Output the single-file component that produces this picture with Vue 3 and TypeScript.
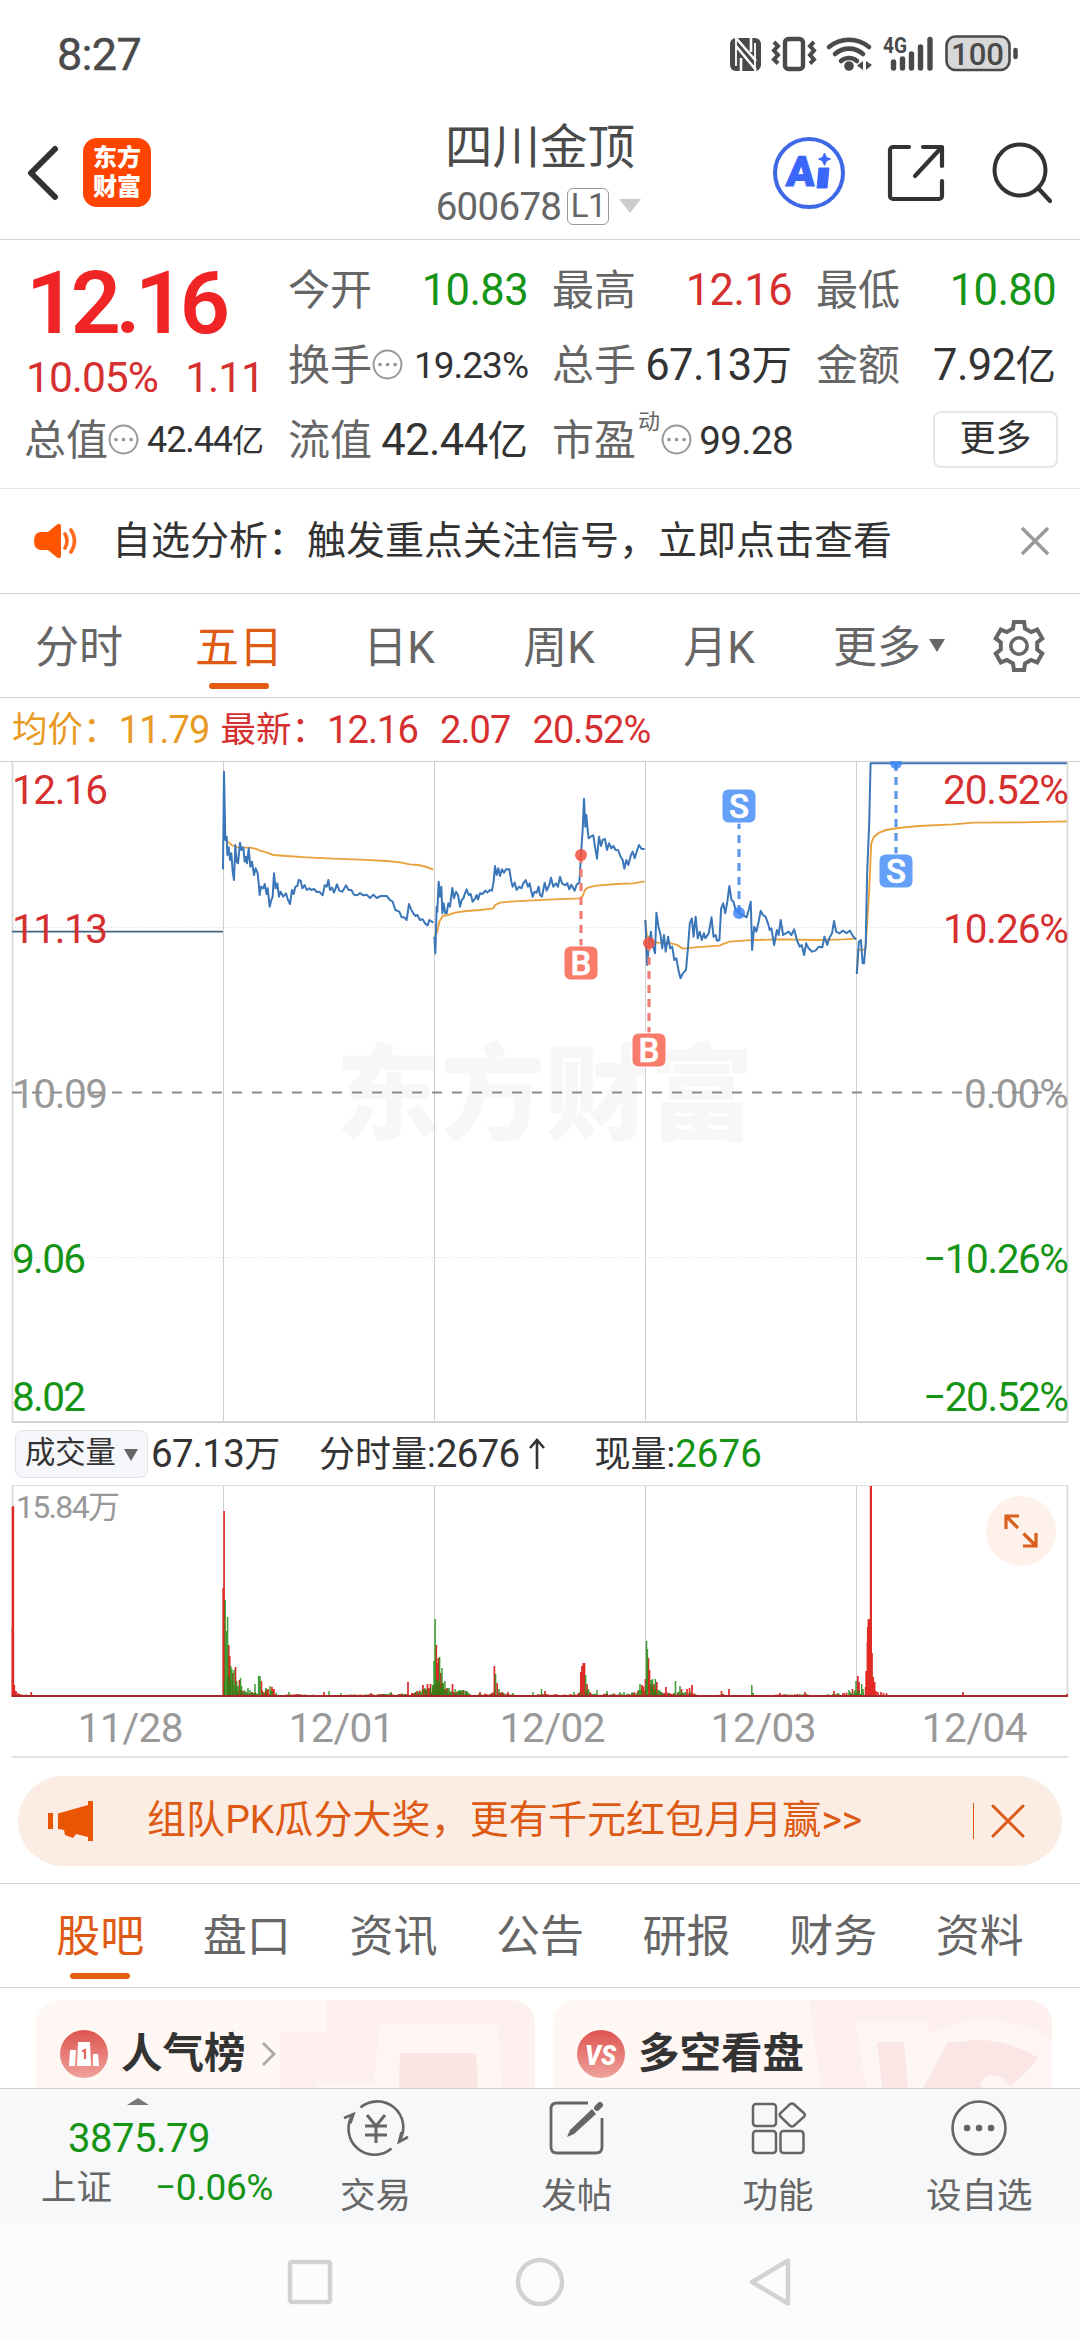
<script setup lang="ts">
interface Tab { label: string; active?: boolean }
interface Series { price: string; avg: string; transform: string }

const periods: Tab[] = [
  { label: '分时' },
  { label: '五日', active: true },
  { label: '日K' },
  { label: '周K' },
  { label: '月K' },
]

const sections: Tab[] = [
  { label: '股吧', active: true },
  { label: '盘口' },
  { label: '资讯' },
  { label: '公告' },
  { label: '研报' },
  { label: '财务' },
  { label: '资料' },
]

const dates = ['11/28', '12/01', '12/02', '12/03', '12/04']
const dayLines = [223.5, 434.5, 645.5, 856.5]

const left = 'translate(200 740) scale(0.33333)'
const right = 'translate(540 590) scale(0.34435 0.33333)'

const series: Series[] = [
  {
    transform: left,
    price: '69,388 72,95 76,300 80,290 82,345 86,322 90,360 94,340 98,395 102,420 106,315 110,365 114,370 120,308 124,330 130,322 134,365 138,350 141,370 146,325 151,380 156,365 162,405 167,385 173,400 176,430 179,465 183,440 190,445 194,432 200,462 203,445 209,500 214,480 218,470 222,400 227,445 232,430 237,470 242,455 250,470 258,460 264,480 270,492 276,450 281,462 286,440 292,438 296,420 302,422 307,445 314,435 320,450 328,445 334,450 342,447 350,456 358,455 368,466 374,436 380,440 385,420 390,450 396,443 402,458 411,433 418,452 427,455 438,436 446,450 454,450 462,464 472,466 480,459 490,466 500,464 510,474 520,464 530,474 542,468 560,468 570,480 578,485 586,510 598,515 605,532 612,532 620,540 627,492 634,510 640,520 646,528 652,525 660,540 668,538 675,550 683,556 688,540 700,548',
    avg: '78,300 84,306 95,315 110,322 150,323 170,327 180,332 200,337 220,345 260,348 320,352 400,356 480,359 560,363 600,367 630,373 655,375 680,381 700,389',
  },
  {
    transform: left,
    price: '703,590 706,640 710,500 712,515 716,425 720,470 724,440 727,520 731,490 736,520 740,520 745,490 750,500 757,444 762,475 768,455 774,465 780,500 785,480 790,475 795,460 800,448 806,465 812,462 818,485 824,478 830,465 834,478 840,460 848,462 856,452 862,458 870,450 876,452 881,425 885,378 890,405 895,385 900,408 906,388 912,398 918,388 928,388 934,425 938,440 944,428 950,450 958,440 964,445 970,430 977,420 984,440 989,430 993,450 998,470 1004,455 1010,458 1016,440 1020,465 1026,470 1034,428 1040,452 1048,435 1053,413 1060,440 1068,430 1074,440 1080,410 1086,430 1096,436 1102,430 1108,448 1114,434 1124,452 1130,434 1138,428 1143,345 1148,270 1152,176 1156,260 1159,225 1163,270 1166,295 1172,290 1180,286 1185,320 1191,356 1197,290 1203,318 1208,300 1215,297 1221,330 1227,310 1234,325 1240,318 1247,330 1254,330 1262,350 1268,360 1273,386 1279,360 1285,375 1293,345 1298,335 1304,355 1310,335 1317,315 1325,327 1334,327',
    avg: '703,590 712,575 718,545 728,528 745,525 765,518 800,513 840,510 880,505 885,495 900,488 940,484 1000,481 1060,478 1140,475 1148,468 1155,450 1165,442 1190,437 1250,432 1300,430 1334,424',
  },
  {
    transform: right,
    price: '306,990 311,1125 317,1060 322,1025 326,1060 334,1090 338,968 344,1010 350,1035 355,1075 360,1035 365,1085 372,1040 378,1075 384,1070 390,1110 396,1105 402,1140 408,1165 415,1150 424,1140 430,1070 435,1000 441,985 446,1040 452,980 458,1045 464,1025 470,1050 476,1030 480,1045 490,1030 498,982 504,1040 510,1035 514,1052 521,1050 526,955 532,940 538,970 544,935 550,888 556,930 562,935 568,960 578,970 590,975 600,982 606,960 612,935 616,1080 622,1010 628,1025 634,1000 641,962 647,975 655,980 662,1000 667,1020 672,1015 680,1065 688,1020 693,1035 699,990 706,1035 714,1030 722,1025 730,1035 738,1018 746,1050 754,1070 760,1065 767,1095 773,1060 780,1075 790,1085 800,1082 810,1070 820,1072 826,1040 834,1065 840,1045 848,1030 854,993 860,1025 870,1030 880,1022 890,1030 900,1022 910,1040 918,1048',
    avg: '306,990 310,1035 320,1050 340,1058 380,1060 396,1064 415,1076 450,1072 520,1067 550,1055 600,1051 700,1048 800,1050 880,1048 918,1046',
  },
  {
    transform: right,
    price: '920,1152 926,1055 932,1050 937,1120 941,1120 946,1060 950,850 956,700 960,520 1530,520',
    avg: '920,1152 924,1080 945,1078 950,1000 956,900 962,760 970,740 985,728 1005,720 1040,714 1100,708 1200,703 1260,698 1400,697 1530,694',
  },
]

const trades = [
  { kind: 'B', x: 581, dot: 855, box: 963 },
  { kind: 'B', x: 649, dot: 943, box: 1050 },
  { kind: 'S', x: 739, dot: 913, box: 806 },
  { kind: 'S', x: 896, dot: 763, box: 871 },
]

const axis = [
  { y: 804, price: '12.16', pct: '20.52%', cls: 'up', w: 95, pw: 126 },
  { y: 943, price: '11.13', pct: '10.26%', cls: 'up', w: 95, pw: 126 },
  { y: 1108, price: '10.09', pct: '0.00%', cls: 'flat', w: 95, pw: 105 },
  { y: 1273, price: '9.06', pct: '−10.26%', cls: 'down', w: 73, pw: 146 },
  { y: 1411, price: '8.02', pct: '−20.52%', cls: 'down', w: 73, pw: 146 },
]

/* minute volume spikes: x, height, colour */
type Bar = [number, number, 'r' | 'g']
const spikes: Bar[] = [
  [12.5, 69, 'r'], [13.3, 191, 'r'], [14.3, 12, 'r'], [16, 6, 'r'], [18, 4, 'r'], [20, 3, 'r'], [22, 2.5, 'r'], [26, 2.5, 'r'], [31.3, 5, 'r'],
  [223.2, 109, 'r'], [225.2, 97, 'g'], [224.1, 186, 'r'], [226.5, 66, 'g'], [227.6, 80, 'g'], [228.7, 52, 'r'], [229.7, 41, 'r'], [230.8, 31, 'g'],
  [231.8, 28, 'g'], [232.8, 24, 'r'], [234, 27, 'g'], [235.5, 30, 'r'], [236.6, 16, 'g'], [238, 11, 'g'], [239.4, 17, 'r'], [240.5, 19, 'g'], [241.6, 11, 'g'], [243, 6, 'r'],
  [248, 9, 'g'], [250, 7, 'g'], [255, 13, 'g'], [258.6, 21, 'g'], [260, 21, 'g'], [261.4, 16, 'r'], [266, 9, 'g'], [268, 8, 'r'], [270, 11, 'g'], [272, 10, 'r'], [274, 8, 'r'],
  [289, 5, 'g'], [324, 5, 'r'], [329, 6, 'g'], [341, 4, 'g'], [371, 4, 'r'], [391, 5, 'g'], [408, 15, 'r'], [417, 6, 'r'], [423, 12, 'r'], [425, 9, 'g'], [427.5, 13, 'r'], [430.5, 13, 'r'], [432.5, 12, 'g'],
  [434, 36, 'g'], [435.1, 78, 'g'], [436.3, 52, 'r'], [437.4, 34, 'r'], [438.4, 39, 'r'], [439.6, 40, 'g'], [440.8, 24, 'r'], [442, 29, 'g'], [443.3, 14, 'g'], [445, 16, 'g'], [447, 9, 'r'], [449, 9, 'g'], [452.5, 13, 'r'], [455, 8, 'g'], [460, 7, 'g'], [467, 6, 'g'],
  [480, 5, 'r'], [494.4, 31, 'r'], [495.6, 23, 'g'], [497.2, 14, 'r'], [499, 8, 'g'], [502, 5, 'r'], [508, 5, 'r'], [513, 4, 'g'], [533, 5, 'g'], [541.5, 8, 'g'], [545, 6, 'r'], [574, 5, 'g'],
  [580.8, 25, 'r'], [582, 31, 'r'], [583.3, 34, 'r'], [584.5, 34, 'r'], [585.6, 22, 'g'], [587, 13, 'r'], [588.6, 8, 'g'], [590, 5, 'r'], [597, 7, 'g'], [607, 6, 'g'], [620, 5, 'g'], [624, 5, 'g'], [632, 4, 'r'], [640, 13, 'g'], [642, 12, 'r'],
  [645.5, 18, 'r'], [646.5, 56, 'g'], [647.4, 48, 'g'], [648.4, 39, 'r'], [649.5, 27, 'r'], [651, 17, 'g'], [652.5, 18, 'g'], [654, 13, 'r'], [655.4, 18, 'g'], [656.8, 15, 'r'], [659, 6, 'g'], [666, 10, 'r'], [675.5, 16, 'g'], [680, 11, 'g'], [681.5, 8, 'r'], [687, 8, 'r'], [689.5, 9, 'r'], [692, 12, 'r'],
  [721.5, 6, 'r'], [729, 8, 'r'], [751.8, 12, 'g'], [753.2, 4, 'g'], [780, 4, 'r'], [805, 5, 'r'], [834, 6, 'r'], [844, 4, 'r'], [849, 7, 'g'], [852.5, 8, 'r'],
  [856, 16, 'g'], [857.8, 21, 'r'], [859, 15, 'r'], [861.7, 13, 'g'], [863, 8, 'g'], [865.6, 10, 'r'], [866.6, 25, 'r'], [867.5, 55, 'r'], [868.5, 78, 'r'], [869.6, 78, 'r'], [870.9, 211, 'r'], [872, 44, 'r'], [873.2, 18, 'r'], [874.6, 15, 'r'], [876, 6, 'r'], [878, 5, 'r'], [881, 5, 'r'], [883.5, 4, 'r'], [886.5, 4, 'r'], [889, 2, 'r'], [963, 5, 'r'], [1067, 3, 'r'],
]

/* quiet minutes between the spikes */
const level: [number, number][] = [
  [223, 30], [232, 16], [240, 8], [250, 5], [258, 4], [265, 7], [274, 7], [280, 2], [300, 3], [320, 1.6], [400, 3.4], [414, 4], [420, 7], [433, 10],
  [436, 26], [444, 10], [452, 8], [466, 6], [472, 2], [490, 4], [500, 5], [506, 3], [530, 1.4], [540, 3.5], [550, 2.4], [576, 3], [586, 8], [592, 3], [600, 3.4], [625, 3], [636, 5], [645, 12],
  [650, 13], [656, 9], [664, 4], [676, 5], [690, 5], [698, 2], [715, 1.2], [722, 3], [740, 1.4], [770, 2], [790, 3], [805, 3], [815, 1.6], [835, 3], [848, 5], [856, 8], [864, 5],
]
function levelAt(x: number): number {
  for (let i = 1; i < level.length; i++) {
    const [x1, y1] = level[i]
    const [x0, y0] = level[i - 1]
    if (x <= x1) return y0 + ((y1 - y0) * (x - x0)) / (x1 - x0)
  }
  return 0
}
const quiet: Bar[] = []
let seed = 7
for (let x = 223.5; x < 864; x += 0.88) {
  seed = (seed * 16807) % 2147483647
  const k = seed / 2147483647
  seed = (seed * 16807) % 2147483647
  quiet.push([x, levelAt(x) * (0.35 + k * 0.75), seed % 100 < 52 ? 'r' : 'g'])
}
const barPath = (c: 'r' | 'g') =>
  [...quiet, ...spikes].filter((b) => b[2] === c).map((b) => `M${b[0].toFixed(1)} 1697v-${b[1].toFixed(1)}`).join('')
const redBars = barPath('r')
const greenBars = barPath('g')

function gearPath(): string {
  const pts: string[] = []
  const at = (deg: number, r: number) => {
    const a = (deg * Math.PI) / 180
    pts.push(`${(27 + r * Math.cos(a)).toFixed(1)},${(27 + r * Math.sin(a)).toFixed(1)}`)
  }
  for (let i = 0; i < 6; i++) {
    const c = -90 + i * 60
    at(c - 19, 18.5)
    at(c - 12, 24.5)
    at(c + 12, 24.5)
    at(c + 19, 18.5)
  }
  return pts.join(' ')
}
const gear = gearPath()
</script>

<template>
  <div class="screen">
    <div class="status">
      <span class="clock">8:27</span>
      <svg class="sys" width="300" height="44" viewBox="724 32 300 44">
        <rect x="730" y="38" width="31" height="33" rx="6" fill="#4a4a4a" />
        <path d="M736 37v29M755 43v29" stroke="#fff" stroke-width="1.8" />
        <path d="M736 38l20 23M736 46l20 24M741 58v13M751 38v14" stroke="#fff" stroke-width="2.6" fill="none" />
        <rect x="785" y="39" width="18" height="30" rx="3.5" fill="none" stroke="#4a4a4a" stroke-width="4.4" />
        <path d="M774 42l4 4-4 4.500 4 4.500-4 4.500 4 4M814 42l-4 4 4 4.500-4 4.500 4 4.500-4 4" fill="none" stroke="#4a4a4a" stroke-width="4" />
        <path d="M829 47a31 31 0 0 1 40 0M835 54a21 21 0 0 1 28 0M841 61a12 12 0 0 1 16 0" fill="none" stroke="#4a4a4a" stroke-width="4.600" stroke-linecap="round" />
        <circle cx="849" cy="66" r="4.800" fill="#4a4a4a" />
        <path d="M863 61v9l-6-4.500zM866 61v9l6-5z" fill="#4a4a4a" />
        <text x="883" y="53" class="net" textLength="24" lengthAdjust="spacingAndGlyphs">4G</text>
        <path d="M893.500 62v6M902.500 59v9M911.500 54v14M920.500 47v21M930 39.500v28.500" stroke="#4a4a4a" stroke-width="5.400" stroke-linecap="round" />
        <rect x="946.500" y="36.500" width="63" height="33.500" rx="9" fill="#d8d8d8" stroke="#4a4a4a" stroke-width="2.600" />
        <text x="951" y="65" class="bat" textLength="53" lengthAdjust="spacingAndGlyphs">100</text>
        <path d="M1015.500 50v7" stroke="#4a4a4a" stroke-width="4.500" stroke-linecap="round" />
      </svg>
    </div>

    <header class="header">
      <div class="side">
        <svg width="36" height="60" viewBox="0 0 36 60"><path d="M31 6L7 30l24 24" fill="none" stroke="#333" stroke-width="6" stroke-linecap="round" stroke-linejoin="round" /></svg>
        <div class="logo"><span>东方</span><span>财富</span></div>
      </div>
      <div class="title">
        <div class="name">四川金顶</div>
        <div class="code"><span>600678</span><b>L1</b><i></i></div>
      </div>
      <div class="side tools">
        <svg class="aibtn" width="76" height="76" viewBox="0 0 76 76">
          <circle cx="38" cy="38" r="34" fill="none" stroke="#3f68e6" stroke-width="4" />
          <text x="15" y="51" class="ai" transform="skewX(-4) translate(3 0)">A</text>
          <path d="M48 33h10l-2 20h-10z" fill="#3a66fa" stroke="#3a66fa" stroke-linejoin="round" />
          <path d="M53.500 18l2 4.500 4 1.500-4 1.800-2 4.500-2-4.500-4-1.800 4-1.500z" fill="#3a66fa" stroke="#3a66fa" />
        </svg>
        <svg class="share" width="60" height="60" viewBox="0 0 60 60"><path d="M22 4H6a3 3 0 0 0-3 3v46a3 3 0 0 0 3 3h46a3 3 0 0 0 3-3V38M36 4h19v19M54 5L28 33" fill="none" stroke="#333" stroke-width="4.200" stroke-linecap="round" stroke-linejoin="round" /></svg>
        <svg width="62" height="62" viewBox="0 0 62 62"><circle cx="29" cy="28" r="25.500" fill="none" stroke="#333" stroke-width="4" /><path d="M47 46l12 13" stroke="#333" stroke-width="4.200" stroke-linecap="round" /></svg>
      </div>
    </header>

    <section class="quote">
      <div class="last">
        <div class="big">12.16</div>
        <div class="chg"><span>10.05%</span><span>1.11</span></div>
      </div>
      <div class="cell"><label>今开</label><em class="down">10.83</em></div>
      <div class="cell"><label>最高</label><em class="up">12.16</em></div>
      <div class="cell"><label>最低</label><em class="down">10.80</em></div>
      <div class="cell"><label>换手</label><svg class="tip" viewBox="0 0 30 30"><circle cx="15" cy="15" r="13.500" /><path d="M7.700 15h.1M15 15h.1M22.300 15h.1" /></svg><em class="mid">19.23%</em></div>
      <div class="cell"><label>总手</label><em>67.13<u>万</u></em></div>
      <div class="cell"><label>金额</label><em>7.92<u>亿</u></em></div>
      <div class="cell"><label>总值</label><svg class="tip" viewBox="0 0 30 30"><circle cx="15" cy="15" r="13.500" /><path d="M7.700 15h.1M15 15h.1M22.300 15h.1" /></svg><em class="small">42.44<u>亿</u></em></div>
      <div class="cell"><label>流值</label><em>42.44<u>亿</u></em></div>
      <div class="cell"><label>市盈</label><sup>动</sup><svg class="tip" viewBox="0 0 30 30"><circle cx="15" cy="15" r="13.500" /><path d="M7.700 15h.1M15 15h.1M22.300 15h.1" /></svg><em class="pe">99.28</em></div>
      <div class="cell end"><button>更多</button></div>
    </section>

    <div class="notice">
      <svg width="46" height="40" viewBox="0 0 46 40">
        <path d="M7 11h8L24 3.500q4-2 4 2v29q0 4-4 2L15 29H7q-6-1-6-9t6-9z" fill="#ff5500" />
        <path d="M32 13q4 7 0 14M38 9q7 11 0 22" fill="none" stroke="#ff6a20" stroke-width="3.600" stroke-linecap="round" />
      </svg>
      <span>自选分析：触发重点关注信号，立即点击查看</span>
      <svg width="30" height="30" viewBox="0 0 30 30"><path d="M2 2l26 26M28 2L2 28" stroke="#999" stroke-width="3.400" /></svg>
    </div>

    <nav class="periods">
      <div v-for="p in periods" :key="p.label" class="tab" :class="{ active: p.active }">{{ p.label }}</div>
      <div class="tab more">更多<i></i></div>
      <div class="gear">
        <svg width="54" height="54" viewBox="0 0 54 54"><polygon :points="gear" fill="none" stroke="#666" stroke-width="4" /><circle cx="27" cy="27" r="8.200" fill="none" stroke="#666" stroke-width="3.600" /></svg>
      </div>
    </nav>

    <div class="legend">
      <span class="avg">均价：</span><span class="avg n a1">11.79</span>
      <span class="up">最新：</span><span class="up n a2">12.16</span><span class="up n a3">2.07</span><span class="up n">20.52%</span>
    </div>

    <svg class="chart" width="1080" height="662" viewBox="0 761 1080 662">
      <text x="336" y="1132" class="mark" textLength="418" lengthAdjust="spacingAndGlyphs">东方财富</text>
      <path d="M12.500 762v660M1067.500 762v660" stroke="#ddd" stroke-width="2" />
      <path v-for="x in dayLines" :key="x" :d="`M${x} 762v660`" stroke="#cfcfcf" stroke-width="1" />
      <path d="M0 761.500h1080" stroke="#cfcfcf" stroke-width="1" />
      <path d="M12 1422h1056" stroke="#d4d4d4" stroke-width="2" />
      <path d="M12 927.500h1056M12 1257.500h1056" stroke="#d8d8d8" stroke-width="1" stroke-dasharray="1 2" />
      <g fill="none" stroke-linejoin="round">
        <path d="M12 931.700h211" stroke="#436480" stroke-width="1.800" />
        <g v-for="(s, i) in series" :key="i" :transform="s.transform">
          <polyline :points="s.avg" stroke="#e8a23c" stroke-width="1.900" vector-effect="non-scaling-stroke" />
          <polyline :points="s.price" stroke="#3a76b8" stroke-width="2" vector-effect="non-scaling-stroke" />
        </g>
      </g>
      <text v-for="a in axis" :key="a.price" x="12" :y="a.y" class="axis" :class="a.cls" :textLength="a.w + 1">{{ a.price }}</text>
      <text v-for="a in axis" :key="a.pct" x="1069" :y="a.y" class="axis" :class="a.cls" text-anchor="end" :textLength="a.pw">{{ a.pct }}</text>
      <path d="M12 1092.500h1056" stroke="#8c8c8c" stroke-width="2.200" stroke-dasharray="10 10" />
      <g v-for="t in trades" :key="t.x" :class="t.kind === 'B' ? 'buy' : 'sell'">
        <path :d="`M${t.x} ${t.dot}V${t.box}`" stroke-width="3.200" stroke-dasharray="8 6" />
        <circle :cx="t.x" :cy="t.dot" r="6" />
        <rect :x="t.x - 18" :y="t.box - 18" width="36" height="36" rx="7" class="halo" />
        <rect :x="t.x - 16.500" :y="t.box - 16.500" width="33" height="33" rx="6" class="box" />
        <text :x="t.x" :y="t.box + 11.500" text-anchor="middle">{{ t.kind }}</text>
      </g>
    </svg>

    <div class="volhead">
      <div class="chip">成交量<i></i></div>
      <span class="v1"><em>67.13</em>万</span>
      <span class="v2">分时量:<em>2676</em></span>
      <svg width="18" height="32" viewBox="0 0 18 32"><path d="M9 31V3M2 10l7-8 7 8" fill="none" stroke="#333" stroke-width="2.600" /></svg>
      <span class="v3">现量:<em class="down">2676</em></span>
    </div>

    <div class="volume">
      <svg width="1080" height="213" viewBox="0 1485 1080 213">
        <path d="M12.500 1485v212M1067.500 1485v212" stroke="#ddd" stroke-width="2" />
        <path v-for="x in dayLines" :key="x" :d="`M${x} 1485v212`" stroke="#cfcfcf" stroke-width="1" />
        <path d="M12 1485.500h1056" stroke="#ddd" stroke-width="1" />
        <path :d="redBars" stroke="#dc2a26" stroke-width="1.700" />
        <path :d="greenBars" stroke="#1f8a12" stroke-width="1.500" stroke-opacity=".85" />
        <path d="M866.500 1697v-26M868 1697v-70M870.900 1697v-211M873 1697v-20M12.800 1697v-190" stroke="#e22a26" stroke-width="2.200" />
        <path d="M12 1696h1056" stroke="#a8282a" stroke-width="1.800" />
        <text x="16" y="1518" class="vmax" textLength="104">15.84万</text>
      </svg>
      <div class="expand">
        <svg width="34" height="34" viewBox="0 0 34 34"><path d="M2 15V2h13M2.500 2.500L14 14M19.500 19.500L32 32M19 32h13V19" fill="none" stroke="#d9601c" stroke-width="3.200" /></svg>
      </div>
    </div>
    <div class="dates"><span v-for="d in dates" :key="d">{{ d }}</span></div>

    <div class="banner">
      <svg width="46" height="40" viewBox="0 0 46 40"><path d="M0 12h5v16H0zM10 12.500L40 4V0h5v40h-5v-4L28 33l-3 4-8-3-1-5-6-1z" fill="#ea5504" /></svg>
      <span>组队PK瓜分大奖，更有千元红包月月赢&gt;&gt;</span>
      <i></i>
      <svg width="34" height="34" viewBox="0 0 34 34"><path d="M2 2l30 30M32 2L2 32" stroke="#dd5a14" stroke-width="3" stroke-linecap="round" /></svg>
    </div>

    <nav class="sections">
      <div v-for="s in sections" :key="s.label" class="tab" :class="{ active: s.active }">{{ s.label }}</div>
    </nav>

    <div class="cards">
      <div class="card">
        <svg class="deco" width="260" height="88" viewBox="0 0 260 88">
          <path d="M52 0h208v88H37L5 88V32h47z" fill="#fdf0ef" />
          <path d="M104 24h118l6 64H42v-5h57z" fill="#fef6f3" />
          <path d="M125 53h76l2 35h-79z" fill="#fae5e3" />
        </svg>
        <svg width="48" height="48" viewBox="0 0 48 48">
          <defs><linearGradient id="badge" x1="0" y1="0" x2="0" y2="1"><stop offset="0" stop-color="#dc5450" /><stop offset="1" stop-color="#f0a29c" /></linearGradient></defs>
          <circle cx="24" cy="24" r="24" fill="url(#badge)" />
          <path d="M10 20h6l-1 16H9zM18 12h12l1 24H17zM33 24h5l1 12h-6z" fill="#fff" />
          <path d="M22 21.500l3-1.500v9" fill="none" stroke="#e06662" stroke-width="2.200" />
        </svg>
        <strong>人气榜</strong>
        <svg class="chev" width="16" height="26" viewBox="0 0 16 26"><path d="M2 2l11 11L2 24" fill="none" stroke="#aaa" stroke-width="2.800" /></svg>
      </div>
      <div class="card">
        <svg class="deco" width="243" height="88" viewBox="0 0 243 88">
          <path d="M0 0h243v88H12z" fill="#fdf0ee" />
          <path d="M46 22h72l4 12q30-18 75-12 30 4 46 18v48H57z" fill="#fef6f4" />
          <path d="M68 42h27l4 46H73zM114 88l25-46h12q40-8 78 16-12 16-28 28-9-15-24-9-10 8-2 11z" fill="#fae7e5" />
        </svg>
        <svg width="48" height="48" viewBox="0 0 48 48">
          <circle cx="24" cy="24" r="24" fill="url(#badge)" />
          <text x="8" y="35" class="vs" textLength="31" lengthAdjust="spacingAndGlyphs">VS</text>
        </svg>
        <strong>多空看盘</strong>
      </div>
    </div>

    <footer class="bar">
      <div class="index">
        <i></i>
        <div class="pt">3875.79</div>
        <div class="row"><span>上证</span><em>−0.06%</em></div>
      </div>
      <div class="act">
        <svg width="66" height="56" viewBox="0 0 66 56">
          <path d="M17.500 7.500A26 26 0 0 1 57 40M48.500 48.500A26 26 0 0 1 9.500 15M1 18l9.500-4-3 9M65 37l-9 5 2.500-10" fill="none" stroke="#666" stroke-width="2.600" />
          <path d="M24 15l9 11 9-11M22 26h22M22 35h22M33 26v17" fill="none" stroke="#666" stroke-width="3" />
        </svg>
        <span>交易</span>
      </div>
      <div class="act">
        <svg width="56" height="56" viewBox="0 0 56 56">
          <path d="M39 3H8q-6 0-6 6v38q0 6 6 6h39q6 0 6-6V18" fill="none" stroke="#666" stroke-width="2.800" />
          <path d="M18 37l3-7L43 9l4 5-22 20z" fill="#666" /><path d="M48 8l3-3" stroke="#666" stroke-width="6" stroke-linecap="round" />
        </svg>
        <span>发帖</span>
      </div>
      <div class="act">
        <svg width="56" height="56" viewBox="0 0 56 56">
          <g fill="none" stroke="#666" stroke-width="2.500"><rect x="3" y="4" width="23" height="22" rx="3" /><rect x="3" y="31" width="23" height="22" rx="3" /><rect x="30.500" y="31" width="23" height="22" rx="3" /><path d="M40 4.200q2-1.500 4 0l10 9q1.500 1.700 0 3.500l-10 9q-2 1.500-4 0l-9.500-9q-1.500-1.800 0-3.500z" /></g>
        </svg>
        <span>功能</span>
      </div>
      <div class="act">
        <svg width="60" height="56" viewBox="0 0 60 56"><circle cx="30" cy="28" r="26.500" fill="none" stroke="#666" stroke-width="2.600" /><path d="M18 28h.1M30 28h.1M42 28h.1" stroke="#666" stroke-width="6.500" stroke-linecap="round" /></svg>
        <span>设自选</span>
      </div>
    </footer>

    <div class="android">
      <svg width="48" height="52" viewBox="0 0 48 52"><rect x="4" y="6" width="40" height="40" rx="2" /></svg>
      <svg width="52" height="52" viewBox="0 0 52 52"><circle cx="26" cy="26" r="22" /></svg>
      <svg width="52" height="52" viewBox="0 0 52 52"><path d="M6 26L42 4.500V47.500z" /></svg>
    </div>
  </div>
</template>

<style>
body { background: #fff; }
</style>

<style scoped>
.screen {
  width: 1080px;
  height: 2340px;
  display: flex;
  flex-direction: column;
  overflow: hidden;
  background: #fff;
  color: #333;
  font-family: Roboto, "Noto Sans CJK SC", sans-serif;
}
.screen * { box-sizing: border-box; }
svg { display: block; flex: none; }
em, u, i, b { font-style: normal; text-decoration: none; font-weight: 400; }
.up { color: #d52f2f; fill: #d52f2f; }
.down { color: #159415; fill: #159415; }
.flat { fill: #999; }

.status { height: 108px; flex: none; display: flex; align-items: flex-start; justify-content: space-between; padding: 33px 56px 0 57px; }
.sys { margin-top: -1px; }
.clock { font-size: 45px; line-height: 44px; color: #4a4a4a; letter-spacing: -0.700px; -webkit-text-stroke: .4px #4a4a4a; }
.net { font-size: 22px; font-weight: 700; fill: #4a4a4a; }
.bat { font-size: 32px; font-weight: 500; fill: #4a4a4a; }

.header { height: 132px; flex: none; display: grid; grid-template-columns: 380px 320px 380px; border-bottom: 1.500px solid #d2d2d2; }
.side { display: flex; align-items: center; padding: 0 0 2px 24px; gap: 24px; }
.side svg:first-child { margin-top: 0; }
.logo { width: 68px; height: 69px; margin-left: -1px; border-radius: 14px; background: #ff4400; color: #fff; display: flex; flex-direction: column; align-items: center; justify-content: center; font: 900 24px/29px Roboto, "Noto Sans CJK SC", sans-serif; }
.tools { justify-content: flex-end; padding: 0 27px 2px 0; gap: 0; }
.aibtn { margin-right: 40px; }
.share { margin-right: 44px; }
.title { display: flex; flex-direction: column; align-items: center; padding-top: 10px; color: #4a4a4a; }
.name { font-size: 47.500px; line-height: 60px; }
.code { display: flex; align-items: center; height: 38px; margin: 9px 0 0 -3px; font-size: 38.500px; color: #666; letter-spacing: -0.700px; }
.code b { width: 42px; height: 37px; margin-left: 6px; border: 1.500px solid #999; border-radius: 6px; font-size: 33px; line-height: 34px; text-align: center; }
.code i { margin-left: 10px; border: 11.500px solid transparent; border-top: 14px solid #ccc; border-bottom: 0; }
.ai { font: 900 42px Roboto, sans-serif; fill: #3a66fa; stroke: #3a66fa; stroke-width: 1; }

.quote { height: 249px; flex: none; padding: 13px 24px 0; display: grid; grid-template-columns: repeat(4, 240px); grid-template-rows: repeat(3, 75px); column-gap: 24px; border-bottom: 1px solid #e8e8e8; }
.last { grid-row: 1 / 3; padding: 0 0 0 2px; color: #d52f2f; }
.big { height: 99px; font-size: 88px; line-height: 99px; font-weight: 600; letter-spacing: -5.500px; color: #f02424; }
.chg { display: flex; justify-content: space-between; font-size: 42.500px; line-height: 51px; letter-spacing: -1px; }
.cell { display: flex; align-items: center; white-space: nowrap; }
.cell label { font-size: 42px; color: #666; line-height: 60px; }
.cell em { margin-left: auto; font-size: 43.500px; line-height: 60px; letter-spacing: -0.600px; }
.cell u { font-size: 40.500px; letter-spacing: 0; }
.cell .mid { font-size: 37px; letter-spacing: -1px; }
.cell .small { font-size: 36px; letter-spacing: -1.100px; }
.cell .small u { font-size: 32px; }
.cell .pe { font-size: 38.500px; letter-spacing: -0.600px; margin-right: -1px; }
.cell sup { align-self: flex-start; font-size: 22px; line-height: 22px; margin: 8px 1px 0 2px; color: #666; }
.tip { width: 31px; height: 31px; margin: -2px 0 0 0; fill: none; stroke: #999; stroke-width: 1.900; }
.tip path { stroke-width: 3.600; stroke-linecap: round; }
.end { justify-content: flex-end; }
button { width: 125px; height: 57px; margin: -3px -2px 0 0; padding: 0 0 1px; border: 2px solid #e6e6e6; border-radius: 8px; background: #fff; color: #333; font: 36px/50px Roboto, "Noto Sans CJK SC", sans-serif; }

.notice { height: 105px; flex: none; display: flex; align-items: center; padding: 0 30px 0 33px; border-bottom: 1.500px solid #d2d2d2; }
.notice span { flex: 1; margin-left: 33px; font-size: 39px; line-height: 60px; white-space: nowrap; }

.periods { height: 104px; flex: none; display: grid; grid-template-columns: repeat(6, 160px) 1fr; border-bottom: 1px solid #d2d2d2; }
.tab { position: relative; display: flex; align-items: center; justify-content: center; padding: 0 2px 3px 0; font-size: 44px; color: #666; }
.tab.active { color: #df5a14; }
.tab.active::after { content: ""; position: absolute; left: 50%; bottom: 8px; width: 60px; height: 6px; margin-left: -31px; border-radius: 3px; background: #e45a10; }
.more { padding-left: 20px; }
.more i { margin: 3px 0 0 8px; border: 8px solid transparent; border-top: 13px solid #666; border-bottom: 0; }
.gear { display: flex; align-items: center; justify-content: center; padding-right: 2px; }

.legend { height: 63px; flex: none; display: flex; align-items: center; padding-left: 12px; font-size: 35.500px; line-height: 60px; white-space: nowrap; }
.avg { color: #e99a24; }
.n { font-size: 38px; letter-spacing: -0.900px; }
.a1 { margin-right: 11px; }
.a2, .a3 { margin-right: 22px; }

.chart { font-family: Roboto, "Noto Sans CJK SC", sans-serif; }
.mark { font: 900 104px "Noto Sans CJK SC", sans-serif; fill: #f7f7f7; }
.axis { font-size: 40.500px; }
.buy path { stroke: #ee7f74; }
.buy circle { fill: #f0513f; fill-opacity: .85; }
.buy .box { fill: #f87b6b; }
.sell path { stroke: #5f9ae8; }
.sell circle { fill: #3f86f3; fill-opacity: .85; }
.sell .box { fill: #64a0f8; }
.halo { fill: #fff; fill-opacity: .7; }
.chart g text { font-size: 33px; font-weight: 500; fill: #fff; stroke: #fff; stroke-width: .6; }

.volhead { height: 62px; flex: none; display: flex; align-items: center; padding-left: 15px; font-size: 36px; line-height: 54px; white-space: nowrap; }
.volhead em { font-size: 38.500px; letter-spacing: -0.700px; }
.chip { display: flex; align-items: center; width: 133px; height: 48px; padding: 0 0 2px 9px; border: 1.500px solid #dfe3e8; border-radius: 8px; background: #f6f7fa; font-size: 30.300px; }
.chip i { margin: 3px 0 0 8px; border: 7.500px solid transparent; border-top: 12px solid #666; border-bottom: 0; }
.v1 { width: 168px; margin-left: 3px; }
.v2 { margin-right: 9px; }
.v3 { margin-left: 48px; }
.v3 .down { letter-spacing: 0; }

.volume { height: 213px; flex: none; position: relative; }
.vmax { font-size: 32px; fill: #999; }
.expand { position: absolute; right: 24px; top: 11px; width: 70px; height: 70px; border-radius: 50%; background: #fef1ea; display: flex; align-items: center; justify-content: center; }
.dates { height: 60px; flex: none; display: grid; grid-template-columns: repeat(5, 211px); margin: 0 12px; padding-left: 13px; border-bottom: 2px solid #e2e2e2; font-size: 40.500px; line-height: 60px; text-align: center; color: #999; letter-spacing: -0.500px; }

.banner { height: 90px; flex: none; margin: 18px 18px 17px; padding: 0 37px 0 30px; border-radius: 45px; background: #fcede4; color: #dd5a14; display: flex; align-items: center; }
.banner span { flex: 1; margin: -2px 0 0 53px; font-size: 39.100px; line-height: 60px; white-space: nowrap; }
.banner i { width: 1.500px; height: 36px; margin-right: 17px; background: #dd5a14; }
.sections { height: 105px; flex: none; display: grid; grid-template-columns: repeat(7, 146.600px); justify-content: center; border-top: 1px solid #d2d2d2; border-bottom: 1px solid #d2d2d2; }
.sections .tab { padding: 0 0 6px; }
.sections .tab.active::after { margin-left: -30px; }

.cards { height: 100px; flex: none; overflow: hidden; display: flex; gap: 18px; padding: 12px 28px 0 36px; }
.card { position: relative; width: 499px; height: 130px; padding: 30px 0 0 24px; border-radius: 24px; overflow: hidden; background: #fef7f4; display: flex; align-items: flex-start; }
.card > * { position: relative; }
.card .deco { position: absolute; right: 0; top: 0; }
.card strong { margin-left: 13px; font-size: 41.500px; line-height: 48px; font-weight: 700; }
.chev { margin: 11px 0 0 15px; }
.vs { font: italic 900 28px Roboto, sans-serif; fill: #fff; }

.bar { height: 136px; flex: none; display: grid; grid-template-columns: 275px repeat(4, 1fr); background: #f6f8fa; border-top: 1.500px solid #d2d2d2; color: #666; }
.index { color: #159415; }
.index i { display: block; width: 0; margin: 9px 0 0 127px; border: 11px solid transparent; border-bottom: 7px solid #777; border-top: 0; }
.pt { margin: 11px 0 0 68px; font-size: 40px; line-height: 46px; letter-spacing: -0.500px; }
.row { display: flex; margin: 2px 0 0 41px; font-size: 35.500px; line-height: 48px; color: #666; }
.row em { margin-left: 43px; font-size: 37px; letter-spacing: -0.400px; color: #159415; }
.act { display: flex; flex-direction: column; align-items: center; padding-top: 11px; }
.act span { margin-top: 16px; font-size: 35.500px; line-height: 48px; }

.android { flex: 1; background: #fcfcfc; display: flex; justify-content: center; gap: 180px; padding: 32px 0 0 4px; }
.android svg { fill: none; stroke: #d2d2d2; stroke-width: 4.500; stroke-linejoin: round; }
</style>
